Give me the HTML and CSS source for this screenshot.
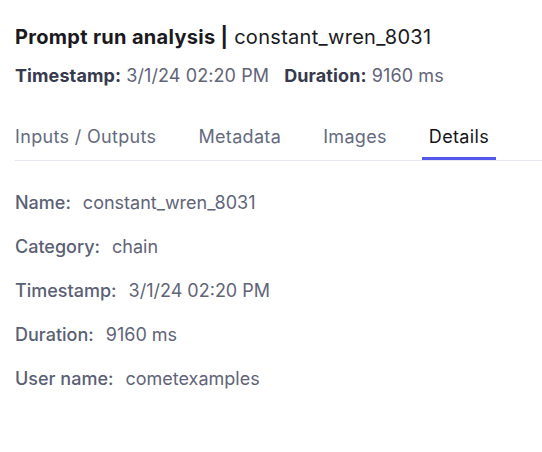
FILE: index.html
```html
<!DOCTYPE html>
<html>
<head>
<meta charset="utf-8">
<link rel="stylesheet" href="styles.css">
</head>
<body>
<div class="panel">
  <h1 class="title"><span class="title-strong">Prompt run analysis |</span> constant_wren_8031</h1>
  <div class="meta">
    <span class="meta-item"><b class="meta-label">Timestamp:</b> 3/1/24 02:20 PM</span>
    <span class="meta-item"><b class="meta-label">Duration:</b> 9160 ms</span>
  </div>
  <div class="tabs">
    <div class="tab-list">
      <div class="tab">Inputs / Outputs</div>
      <div class="tab">Metadata</div>
      <div class="tab">Images</div>
      <div class="tab tab-active">Details</div>
    </div>
  </div>
  <div class="details">
    <div class="row"><span class="label">Name:</span><span class="value">constant_wren_8031</span></div>
    <div class="row"><span class="label">Category:</span><span class="value">chain</span></div>
    <div class="row"><span class="label">Timestamp:</span><span class="value">3/1/24 02:20 PM</span></div>
    <div class="row"><span class="label">Duration:</span><span class="value">9160 ms</span></div>
    <div class="row"><span class="label">User name:</span><span class="value">cometexamples</span></div>
  </div>
</div>
</body>
</html>
```
FILE: styles.css
```css
html, body {
  margin: 0;
  padding: 0;
  background: #ffffff;
}
body {
  font-family: Inter, "Noto Sans", sans-serif;
  color: #1b1b1f;
}
.panel {
  padding: 23px 0 0 15px;
}
.title {
  margin: 0;
  font-size: 20px;
  font-weight: 400;
  line-height: 28px;
  letter-spacing: 0.3px;
  color: #1a1a1e;
}
.title-strong {
  font-weight: 700;
}
.meta {
  margin-top: 13px;
  display: flex;
  gap: 15px;
  font-size: 18px;
  line-height: 24px;
  letter-spacing: 0.1px;
  color: #5f6478;
}
.meta-label {
  font-weight: 700;
  color: #373a4d;
}
.tabs {
  margin-top: 37px;
  border-bottom: 1px solid #e6e6ee;
}
.tab-list {
  display: flex;
  gap: 28px;
  margin-left: -7px;
}
.tab {
  padding: 0 7px 8px;
  font-size: 18px;
  line-height: 24px;
  letter-spacing: 0.33px;
  color: #646a80;
  border-bottom: 3px solid transparent;
}
.tab-active {
  color: #141418;
  border-bottom-color: #5458e8;
}
.details {
  padding-top: 30px;
  display: flex;
  flex-direction: column;
  gap: 20px;
}
.row {
  font-size: 18px;
  line-height: 24px;
  color: #5f6478;
  display: flex;
  gap: 12px;
}
.label {
  font-weight: 500;
  color: #5a5f74;
}
```
